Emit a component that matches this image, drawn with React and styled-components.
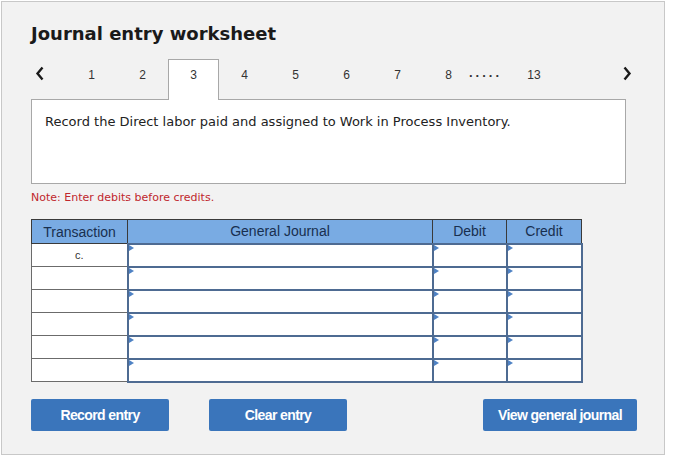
import styled, { createGlobalStyle } from "styled-components";

// global
const GlobalStyle = createGlobalStyle`
  body {
    margin: 0;
    background: #ffffff;
    font-family: "DejaVu Sans", Verdana, sans-serif;
  }
`;

// style
const Panel = styled.div`
  margin: 1px 0 0 1px;
  width: 664px;
  box-sizing: border-box;
  border: 1px solid #c8c8c8;
  background: #f2f2f2;
  padding: 20px 0 23px 29px;
`;

const Title = styled.h1`
  margin: 0;
  font-family: "DejaVu Sans", Verdana, sans-serif;
  font-size: 18px;
  font-weight: bold;
  color: #1a1a1a;
  line-height: 24px;
`;

const TabBar = styled.div`
  display: flex;
  align-items: flex-start;
  height: 40px;
  margin-top: 13px;
  width: 595px;
  position: relative;
  z-index: 1;
`;

const Arrow = styled.div`
  width: ${p => p.$w}px;
  height: 40px;
  display: flex;
  justify-content: ${p => (p.$right ? "center" : "flex-start")};
  padding: 7px 0 0 ${p => (p.$right ? 0 : 4)}px;
  box-sizing: border-box;
  margin-left: ${p => (p.$right ? "auto" : "0")};
  margin-right: ${p => (p.$right ? "-14px" : "0")};
`;

const Tab = styled.div`
  width: ${p => p.$w || 51}px;
  box-sizing: border-box;
  padding-top: 8px;
  text-align: center;
  font-family: "Liberation Sans", Arial, sans-serif;
  font-size: 12px;
  line-height: 15px;
  color: #333;
  background: ${p => (p.$active ? "#ffffff" : "transparent")};
  border: 1px solid ${p => (p.$active ? "#a8a8a8" : "transparent")};
  border-bottom: none;
  height: ${p => (p.$active ? "41px" : "40px")};
`;

const Dots = styled.div`
  margin-left: -5px;
  width: 33px;
  padding-top: 6px;
  font-family: "Liberation Sans", Arial, sans-serif;
  font-size: 13px;
  font-weight: bold;
  letter-spacing: 3px;
  color: #333;
`;

const Prompt = styled.div`
  width: 595px;
  height: 85px;
  box-sizing: border-box;
  background: #ffffff;
  border: 1px solid #a8a8a8;
  padding: 14px 13px;
  font-family: "DejaVu Sans", Verdana, sans-serif;
  font-size: 13px;
  line-height: 16px;
  color: #222;
`;

const Note = styled.div`
  margin-top: 7px;
  font-family: "DejaVu Sans", Verdana, sans-serif;
  font-size: 11px;
  line-height: 13px;
  color: #c0272d;
`;

const Sheet = styled.table`
  margin-top: 15px;
  border-collapse: collapse;
  table-layout: fixed;
`;

const HeadRow = styled.tr`
  height: 24px;
`;

const BodyRow = styled.tr`
  height: 23px;
`;

const HeadCell = styled.th`
  width: ${p => p.$w}px;
  padding: 0;
  background: #79abe3;
  border: 1px solid #3a3a3a;
  font-family: "Liberation Sans", Arial, sans-serif;
  font-size: 14px;
  font-weight: normal;
  color: #182f4f;
`;

const TxnCell = styled.td`
  padding: 0;
  background: #ffffff;
  border: 1px solid #6b6b6b;
  text-align: center;
  font-family: "Liberation Sans", Arial, sans-serif;
  font-size: 11px;
  color: #333;
`;

const EntryCell = styled.td`
  padding: 0;
  background: #ffffff;
  border: 2px solid #4e6b92;
  position: relative;

  &::before {
    content: "";
    position: absolute;
    left: 0;
    top: 0;
    border-left: 5px solid #4f82c4;
    border-top: 3px solid transparent;
    border-bottom: 3px solid transparent;
  }
`;

const ButtonRow = styled.div`
  display: flex;
  margin-top: 16px;
  width: 606px;
`;

const ActionButton = styled.button`
  width: ${p => p.$w}px;
  height: 32px;
  margin-left: ${p => p.$ml || 0}px;
  padding: 0;
  border: none;
  border-radius: 2px;
  background: #3a75bb;
  color: #ffffff;
  font-family: "Liberation Sans", Arial, sans-serif;
  font-size: 14px;
  font-weight: bold;
  letter-spacing: -0.6px;
  cursor: pointer;
`;

const Chevron = ({ dir }) => (
  <svg width="10" height="15" viewBox="0 0 10 15">
    <path
      d={dir === "left" ? "M7.5 1.5 L2.5 7.5 L7.5 13.5" : "M2.5 1.5 L7.5 7.5 L2.5 13.5"}
      fill="none"
      stroke="#1a1a1a"
      strokeWidth="2.4"
    />
  </svg>
);

const rows = ["c.", "", "", "", "", ""];

const App = () => {
  return (
    <>
      <GlobalStyle />
      <Panel>
        <Title>Journal entry worksheet</Title>

        {/* tabs */}
        <TabBar>
          <Arrow $w={35}>
            <Chevron dir="left" />
          </Arrow>
          {[1, 2, 3, 4, 5, 6, 7, 8].map(n => (
            <Tab key={n} $active={n === 3}>{n}</Tab>
          ))}
          <Dots>.....</Dots>
          <Tab $w={64}>13</Tab>
          <Arrow $w={26} $right>
            <Chevron dir="right" />
          </Arrow>
        </TabBar>

        <Prompt>Record the Direct labor paid and assigned to Work in Process Inventory.</Prompt>
        <Note>Note: Enter debits before credits.</Note>

        {/* journal */}
        <Sheet>
          <thead>
            <HeadRow>
              <HeadCell $w={95}>Transaction</HeadCell>
              <HeadCell $w={304}>General Journal</HeadCell>
              <HeadCell $w={73}>Debit</HeadCell>
              <HeadCell $w={74}>Credit</HeadCell>
            </HeadRow>
          </thead>
          <tbody>
            {rows.map((txn, i) => (
              <BodyRow key={i}>
                <TxnCell>{txn}</TxnCell>
                <EntryCell />
                <EntryCell />
                <EntryCell />
              </BodyRow>
            ))}
          </tbody>
        </Sheet>

        <ButtonRow>
          <ActionButton $w={138}>Record entry</ActionButton>
          <ActionButton $w={138} $ml={40}>Clear entry</ActionButton>
          <ActionButton $w={154} $ml={136}>View general journal</ActionButton>
        </ButtonRow>
      </Panel>
    </>
  );
};

export default App;
